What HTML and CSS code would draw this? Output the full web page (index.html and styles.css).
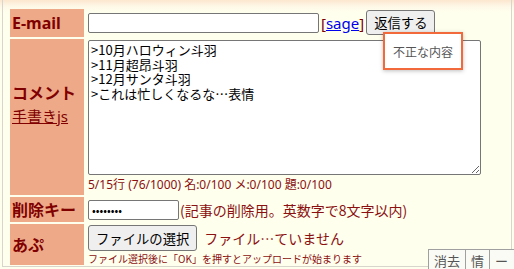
FILE: index.html
```html
<!DOCTYPE html>
<html lang="ja">
<head>
<meta charset="utf-8">
<link rel="stylesheet" href="styles.css">
</head>
<body>
<div class="wrap">
  <table class="ftbl">
    <tr class="r-mail">
      <th class="lbl">E-mail</th>
      <td class="fld">
        <div class="line">
          <input class="in-mail" type="text">
          <span class="sage">[<a href="#">sage</a>]</span>
          <button class="btn btn-send">返信する</button>
        </div>
      </td>
    </tr>
    <tr class="r-com">
      <th class="lbl lbl-com">コメント<br><a class="tegaki" href="#">手書きjs</a></th>
      <td class="fld fld-top">
        <textarea class="ta">&gt;10月ハロウィン斗羽
&gt;11月超昂斗羽
&gt;12月サンタ斗羽
&gt;これは忙しくなるな…表情</textarea>
        <div class="count">5/15行 (76/1000) 名:0/100 メ:0/100 題:0/100</div>
      </td>
    </tr>
    <tr class="r-del">
      <th class="lbl">削除キー</th>
      <td class="fld">
        <div class="line">
          <input class="in-del" type="password" value="abcdefgh">
          <span class="note">(記事の削除用。英数字で8文字以内)</span>
        </div>
      </td>
    </tr>
    <tr class="r-up">
      <th class="lbl">あぷ</th>
      <td class="fld fld-top">
        <div class="line">
          <button class="btn btn-file">ファイルの選択</button>
          <span class="note">ファイル…ていません</span>
        </div>
        <div class="small">ファイル選択後に「OK」を押すとアップロードが始まります</div>
      </td>
    </tr>
  </table>
  <div class="tip">不正な内容</div>
</div>
<div class="tools">
  <button class="tbtn">消去</button><button class="tbtn">情</button><button class="tbtn">ー</button>
</div>
</body>
</html>
```

FILE: styles.css
```css
html, body {
  margin: 0;
  padding: 0;
}
body {
  width: 514px;
  height: 269px;
  overflow: hidden;
  position: relative;
  background: linear-gradient(#fce6cf 0px, #fef7e6 6px, #ffffee 12px) no-repeat;
  background-color: #ffffee;
  font-family: "Noto Sans CJK JP", "Noto Sans", sans-serif;
  color: #800000;
}
.wrap {
  position: relative;
  margin: 0 2px;
  height: 267px;
  box-sizing: border-box;
  border: 1px solid #d8d6cc;
  border-top: none;
  padding: 7px 5px 0 5px;
}
.ftbl {
  border-collapse: separate;
  border-spacing: 2px;
}
.r-mail { height: 28px; }
.r-com { height: 156px; }
.r-del { height: 25px; }
.r-up { height: 41px; }
.lbl {
  background: #eeaa88;
  color: #800000;
  font-family: "Noto Sans", "Noto Sans CJK JP", sans-serif;
  font-weight: bold;
  font-size: 16px;
  text-align: left;
  padding: 0 0 0 2px;
  width: 72px;
  line-height: 20px;
  vertical-align: middle;
}
.lbl-com {
  vertical-align: top;
  line-height: 23px;
  padding-top: 43px;
}
.tegaki {
  color: #800000;
  font-weight: normal;
  font-size: 15px;
}
.fld {
  padding: 0 0 0 2px;
  vertical-align: middle;
}
.fld-top { vertical-align: top; padding-top: 1px; }
.line {
  display: flex;
  align-items: center;
  white-space: nowrap;
}
input, textarea, button {
  font-family: "Noto Sans CJK JP", "Noto Sans", sans-serif;
}
.in-mail {
  width: 231px;
  height: 20px;
  box-sizing: border-box;
  border: 1px solid #767676;
  border-radius: 2px;
  margin: 0;
  padding: 0 2px;
}
.sage {
  font-family: "Noto Sans", sans-serif;
  font-size: 15px;
  color: #800000;
  margin-left: 2px;
  line-height: 18px;
}
.sage a { color: #0000ee; }
.btn {
  font-size: 13.333px;
  background: #efefef;
  border: 1px solid #767676;
  border-radius: 3px;
  color: #000;
  padding: 0 7px;
  margin: 0;
  white-space: nowrap;
}
.btn-send {
  margin-left: 2px;
  height: 25px;
  margin-top: -1px;
}
.ta {
  display: block;
  width: 393px;
  height: 135px;
  box-sizing: border-box;
  border: 1px solid #767676;
  border-radius: 2px;
  margin: 0;
  padding: 2px 2px;
  font-size: 13px;
  line-height: 14.7px;
  color: #000;
  resize: both;
}
.count {
  font-family: "Noto Sans", "Noto Sans CJK JP", sans-serif;
  font-size: 12px;
  margin-top: 2px;
  line-height: 16px;
  color: #8b1010;
}
.in-del {
  width: 91px;
  height: 20px;
  box-sizing: border-box;
  border: 1px solid #767676;
  border-radius: 2px;
  margin: 0;
  padding: 0 3px;
  font-size: 11px;
}
.note {
  font-size: 14px;
  margin-left: 1px;
  color: #8b1010;
}
.btn-file {
  height: 26px;
  margin-right: 6px;
}
.small {
  font-size: 10px;
  line-height: 12px;
  margin-top: 2px;
  color: #8b1010;
  white-space: nowrap;
}
.tip {
  position: absolute;
  left: 380px;
  top: 32px;
  width: 80px;
  height: 38px;
  box-sizing: border-box;
  border: 2px solid #f26a3b;
  background: #fff;
  box-shadow: 0 1px 4px rgba(0,0,0,0.25);
  color: #555;
  font-size: 12px;
  display: flex;
  align-items: center;
  justify-content: center;
}
.tools {
  position: absolute;
  left: 428px;
  top: 249px;
  display: flex;
  white-space: nowrap;
}
.tbtn {
  font-family: "Noto Sans CJK JP", sans-serif;
  font-size: 13px;
  color: #555;
  background: #fbfbf6;
  border: 1px solid #a0a0a0;
  border-right: none;
  height: 22px;
  padding: 0 5px;
  margin: 0;
  white-space: nowrap;
}
.tbtn:last-child { border-right: 1px solid #a0a0a0; padding-right: 8px; }
```
